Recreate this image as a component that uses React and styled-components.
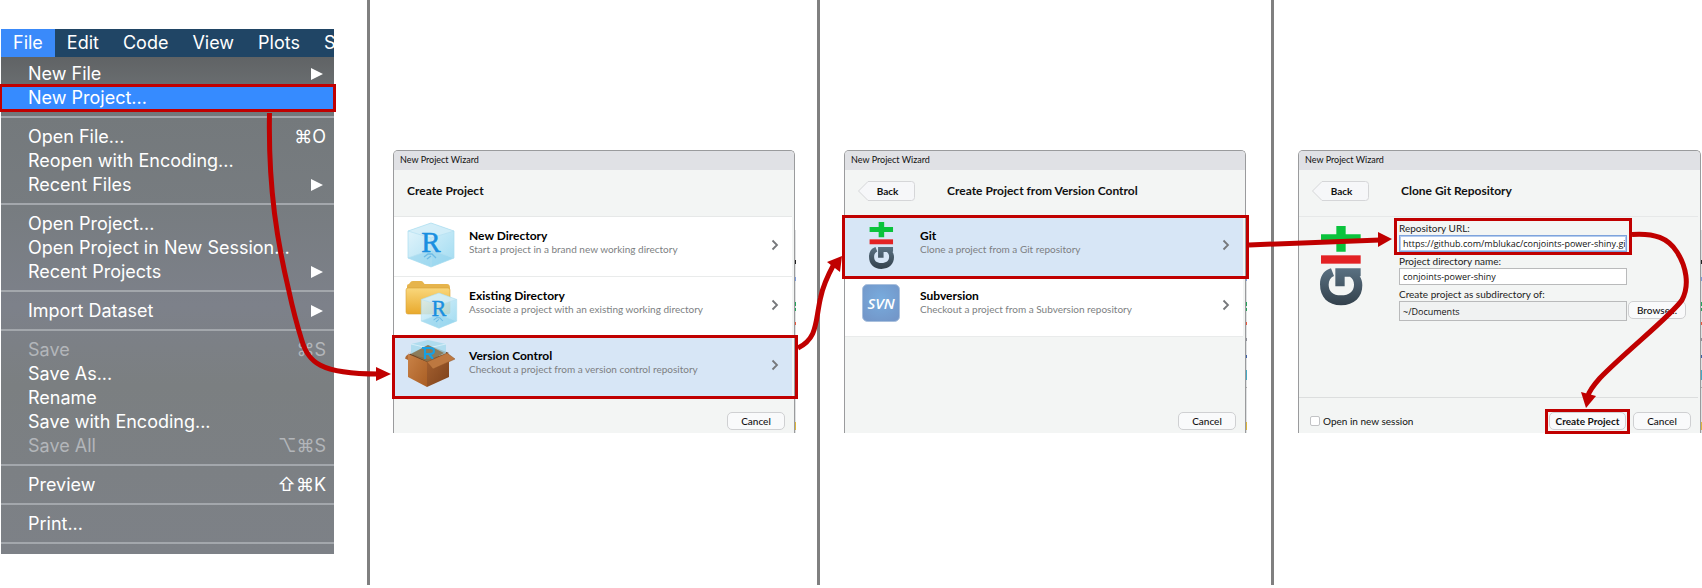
import React, { useId } from "react";
import styled, { createGlobalStyle, css } from "styled-components";

const RED = "#c00000";

const GlobalStyle = createGlobalStyle`
  *, *::before, *::after { box-sizing: border-box; }
  body { margin: 0; background: #fff; }
  button, input { font: inherit; color: inherit; margin: 0; }
`;

/* ---------- page ---------- */

const Board = styled.main`
  position: relative;
  display: grid;
  grid-template-columns: 370fr 450fr 454fr 428fr;
  font-family: Lato, "Open Sans", sans-serif;
  font-size: 10px;
  line-height: 14px;
  color: #111;
`;

const Panel = styled.section`
  min-height: 585px;
  padding: ${(p) => p.$padding};
  border-right: ${(p) => (p.$last ? "none" : "3px solid #808080")};
  min-width: 0;
`;

const highlight = css`
  position: relative;
  &::after {
    content: "";
    position: absolute;
    inset: ${(p) => p.$inset || "-2px"};
    border: 3px solid ${RED};
    pointer-events: none;
    z-index: 1;
  }
`;

/* ---------- file menu ---------- */

const MenuShot = styled.div`
  font-family: Inter, "DejaVu Sans", sans-serif;
  font-size: 18px;
  line-height: 24px;
  color: #fff;
`;

const MenuBar = styled.nav`
  display: flex;
  height: 28px;
  overflow: hidden;
  background: #204565;
`;

const MenuTab = styled.button`
  flex: none;
  border: 0;
  padding: 0 12px;
  background: ${(p) => (p.$active ? "#3a8afa" : "transparent")};
`;

const MenuList = styled.div`
  padding: 5px 0 3px;
  background: linear-gradient(#606365, #74797c 12%, #777c80 30%, #7d818a 50%, #7b7f81 66%, #7d8187);
`;

const MenuItem = styled.button`
  display: flex;
  align-items: center;
  justify-content: space-between;
  width: 100%;
  height: 24px;
  border: 0;
  padding: 0 8px 0 27px;
  text-align: left;
  white-space: nowrap;
  background: ${(p) => (p.$marked ? "#368bff" : "transparent")};
  color: ${(p) => (p.disabled ? "#b3b6ba" : "#fff")};
  ${(p) => p.$marked && highlight}
`;

const Divider = styled.hr`
  height: 2px;
  margin: 6px 0 7px;
  border: 0;
  background: #a3a7ac;
`;

const SubmenuArrow = () => (
  <svg width="15" height="12" viewBox="0 0 15 12" aria-hidden="true">
    <path d="M0 0L12 6L0 12Z" fill="#fff" />
  </svg>
);

const MENU = [
  [{ label: "New File", sub: true }, { label: "New Project...", marked: true }],
  [{ label: "Open File...", keys: "⌘O" }, { label: "Reopen with Encoding..." }, { label: "Recent Files", sub: true }],
  [{ label: "Open Project..." }, { label: "Open Project in New Session..." }, { label: "Recent Projects", sub: true }],
  [{ label: "Import Dataset", sub: true }],
  [
    { label: "Save", keys: "⌘S", disabled: true },
    { label: "Save As..." },
    { label: "Rename" },
    { label: "Save with Encoding..." },
    { label: "Save All", keys: "⌥⌘S", disabled: true },
  ],
  [{ label: "Preview", keys: "⇧⌘K" }],
  [{ label: "Print..." }],
];

function FileMenu() {
  return (
    <MenuShot>
      <MenuBar>
        {["File", "Edit", "Code", "View", "Plots", "Session"].map((t, i) => (
          <MenuTab key={t} $active={i === 0}>{t}</MenuTab>
        ))}
      </MenuBar>
      <MenuList>
        {MENU.map((group, g) => (
          <React.Fragment key={g}>
            {group.map((m) => (
              <MenuItem key={m.label} disabled={m.disabled} $marked={m.marked}>
                <span>{m.label}</span>
                {m.sub && <SubmenuArrow />}
                {m.keys && <span>{m.keys}</span>}
              </MenuItem>
            ))}
            <Divider />
          </React.Fragment>
        ))}
      </MenuList>
    </MenuShot>
  );
}

/* ---------- wizard window ---------- */

const Window = styled.div`
  position: relative;
  display: flex;
  flex-direction: column;
  min-height: 283px;
  border: 1px solid #9a9b9d;
  border-bottom: 0;
  border-radius: 5px 5px 0 0;
  background: #f3f5f4;
`;

const TitleBar = styled.div`
  height: 19px;
  padding: 0 6px;
  border-radius: 4px 4px 0 0;
  background: #e0e1e5;
  font-size: 9px;
  line-height: 18px;
`;

const Header = styled.header`
  display: flex;
  align-items: center;
  gap: 32px;
  height: 47px;
  margin-right: 2px;
  padding: 0 13px 4px;
  border-bottom: 1px solid #e6e8e8;
`;

const Heading = styled.h2`
  margin: 0;
  font-size: 12px;
  line-height: 16px;
  font-weight: 700;
  white-space: nowrap;
`;

const BackButton = styled.button`
  position: relative;
  width: 57px;
  height: 20px;
  border: 0;
  padding: 0 0 0 2px;
  background: none;
  font-weight: 700;
`;

const BackShape = styled.svg`
  position: absolute;
  inset: 0;
`;

const BackLabel = styled.span`
  position: relative;
`;

const Footer = styled.footer`
  display: flex;
  align-items: center;
  justify-content: flex-end;
  gap: 7px;
  height: 36px;
  margin-top: auto;
  margin-right: 2px;
  padding: 10px 7px 0 11px;
  border-top: 1px solid ${(p) => (p.$ruled ? "#dcdede" : "transparent")};
`;

const Button = styled.button`
  flex: none;
  width: ${(p) => p.$width || "58px"};
  height: 18px;
  border: 1px solid #cfd0d2;
  border-radius: 5px;
  padding: 0;
  background: #f9fafb;
  font-weight: ${(p) => (p.$strong ? 700 : 500)};
  white-space: nowrap;
`;

const Marked = styled.div`
  ${highlight}
  display: flex;
`;

const OptionList = styled.div`
  margin-right: 2px;
  background: #fff;
`;

const Option = styled.button`
  display: flex;
  width: 100%;
  height: 60px;
  border: 0;
  border-bottom: 1px solid #e9ebeb;
  padding: 2px 13px 0 10px;
  text-align: left;
  background: ${(p) => (p.$marked ? "#d7e6f6" : "#fff")};
  ${(p) => p.$marked && highlight}
`;

const OptionText = styled.span`
  flex: 1;
  padding: 10px 0 0 13px;
  line-height: 13px;
  color: #7d7f82;
  white-space: nowrap;
`;

const OptionTitle = styled.strong`
  display: block;
  font-size: 12px;
  line-height: 14px;
  color: #000;
`;

const Chevron = styled.svg`
  flex: none;
  margin-top: 20px;
`;

const Sliver = styled.svg`
  position: absolute;
  right: -2px;
  top: 79px;
`;

function DesktopSliver() {
  return (
    <Sliver width="1" height="203" viewBox="0 0 1 203" aria-hidden="true">
      <rect width="1" height="203" fill="#dfe1e2" />
      <rect y="30" width="1" height="4" fill="#222" />
      <rect y="47" width="1" height="4" fill="#7c9bdc" />
      <rect y="72" width="1" height="4" fill="#24a35a" />
      <rect y="78" width="1" height="3" fill="#24a35a" />
      <rect y="92" width="1" height="3" fill="#e8573c" />
      <rect y="108" width="1" height="3" fill="#8d8f98" />
      <rect y="125" width="1" height="3" fill="#3b5fa5" />
      <rect y="140" width="1" height="10" fill="#45a9c4" />
      <rect y="157" width="1" height="1" fill="#aaa" />
      <rect y="192" width="1" height="8" fill="#dcb63c" />
    </Sliver>
  );
}

function Wizard({ title, back, footer, ruled, children }) {
  return (
    <Window>
      <TitleBar>New Project Wizard</TitleBar>
      <Header>
        {back && (
          <BackButton>
            <BackShape width="57" height="20" viewBox="0 0 57 20" aria-hidden="true">
              <path d="M10 .5H53.5Q56.5 .5 56.5 3.5V16.5Q56.5 19.5 53.5 19.5H10L.5 10Z" fill="#f6f7f9" stroke="#d5d6d8" />
            </BackShape>
            <BackLabel>Back</BackLabel>
          </BackButton>
        )}
        <Heading>{title}</Heading>
      </Header>
      {children}
      <Footer $ruled={ruled}>{footer}</Footer>
      <DesktopSliver />
    </Window>
  );
}

function WizardOption({ icon, title, text, marked, inset }) {
  return (
    <Option $marked={marked} $inset={inset}>
      {icon}
      <OptionText>
        <OptionTitle>{title}</OptionTitle>
        {text}
      </OptionText>
      <Chevron width="8" height="12" viewBox="0 0 8 12" aria-hidden="true">
        <path d="M1.5 1.5L6 6L1.5 10.5" fill="none" stroke="#76787b" strokeWidth="1.8" />
      </Chevron>
    </Option>
  );
}

/* ---------- drawings ---------- */

const IconSvg = styled.svg`
  flex: none;
  overflow: visible;
`;

function Cube({ id }) {
  return (
    <g>
      <defs>
        <linearGradient id={id} x1="0" y1="0" x2="1" y2="1">
          <stop offset="0" stopColor="#e2f4fb" />
          <stop offset="1" stopColor="#8fd5ef" />
        </linearGradient>
      </defs>
      <path d="M24 0L47 8V35L24 44L1 35V8Z" fill={`url(#${id})`} fillOpacity=".85" />
      <path d="M1 8L24 15L47 8L24 0Z" fill="#d3eef8" fillOpacity=".8" />
      <path d="M1 35L24 27L47 35L24 44Z" fill="#8bd0eb" fillOpacity=".5" />
      <path d="M1 8L24 15L47 8M1 35L24 27L47 35M24 15V44" fill="none" stroke="#b5e0f0" strokeWidth=".7" />
      <path d="M24 0L47 8V35L24 44L1 35V8Z" fill="none" stroke="#a9dcef" strokeWidth=".7" />
      <path d="M17 34L21 31H25L29 35M20 36L24 33" fill="none" stroke="#55aee0" strokeWidth="1.3" strokeOpacity=".7" />
      <text x="24" y="29" textAnchor="middle" fontFamily='"Liberation Serif", serif' fontSize="29" fill="#1a8fe0" stroke="#1a8fe0" strokeWidth=".5">R</text>
    </g>
  );
}

function CubeIcon() {
  const id = useId();
  return (
    <IconSvg width="52" height="52" viewBox="0 0 52 52" aria-hidden="true">
      <g transform="translate(3 4)"><Cube id={id} /></g>
    </IconSvg>
  );
}

function FolderIcon() {
  const id = useId();
  return (
    <IconSvg width="52" height="52" viewBox="0 0 52 52" aria-hidden="true">
      <defs>
        <linearGradient id={id + "f"} x1="0" y1="0" x2="0" y2="1">
          <stop offset="0" stopColor="#f9d77c" />
          <stop offset="1" stopColor="#e9a92c" />
        </linearGradient>
      </defs>
      <path d="M3 7Q3 5 5 5L7 2.500Q7.500 2 9 2H17Q18.500 2 19 3L20.500 5H43Q46 5 46 9V12H3Z" fill="#e6b44c" />
      <path d="M2 11Q2 9 4 9H44Q46 9 46 11V33Q46 35 44 35H4Q2 35 2 33Z" fill={`url(#${id}f)`} stroke="#d9a136" strokeWidth=".6" />
      <g transform="translate(16.500 14) scale(.77 .8)"><Cube id={id} /></g>
    </IconSvg>
  );
}

function PackageIcon() {
  const id = useId();
  return (
    <IconSvg width="52" height="52" viewBox="0 0 52 52" aria-hidden="true">
      <defs>
        <linearGradient id={id + "l"} x1="0" y1="0" x2="1" y2="1">
          <stop offset="0" stopColor="#c98247" />
          <stop offset="1" stopColor="#a95e24" />
        </linearGradient>
        <linearGradient id={id + "r"} x1="0" y1="0" x2="1" y2="1">
          <stop offset="0" stopColor="#a76231" />
          <stop offset="1" stopColor="#7d421b" />
        </linearGradient>
      </defs>
      <path d="M4 16L24 6L45 14L24 24Z" fill="#6d4526" />
      <path d="M7 5L24 1L42 5V15L24 20L7 15Z" fill="#a5d9ec" fillOpacity=".8" />
      <path d="M7 5L24 9L42 5" fill="none" stroke="#dff3fa" strokeWidth=".8" />
      <path d="M7 15L24 6L40 14L24 23Z" fill="#8a7450" fillOpacity=".9" />
      <path d="M18 9H26Q30 9 30 12Q30 15 26 15H21M21 9V20M25 15L29 20" fill="none" stroke="#16a0e3" strokeWidth="2.200" />
      <path d="M4 15L23 23V48L4 38Z" fill={`url(#${id}l)`} />
      <path d="M23 23L45 15V38L23 48Z" fill={`url(#${id}r)`} />
      <path d="M4 15L8 12L2 17L1 19.500L4 21Z" fill="#b06a35" />
      <path d="M23 23L43 14L51 20L29 30Z" fill="#bd7840" stroke="#8e5225" strokeWidth=".5" />
    </IconSvg>
  );
}

function GitMark() {
  const id = useId();
  return (
    <g>
      <defs>
        <linearGradient id={id} x1="0" y1="126" x2="0" y2="238" gradientUnits="userSpaceOnUse">
          <stop offset="0" stopColor="#5a7182" />
          <stop offset="1" stopColor="#33414c" />
        </linearGradient>
      </defs>
      <path d="M49 0H77V25H122V51H77V77H49V51H3V25H49Z" fill="#0ac33c" />
      <rect x="3" y="88" width="119" height="25" fill="#e32224" />
      <path
        d="M27 129C10 136 0 152 0 175C0 214 24 238 63 238C103 238 127 214 127 178C127 167 124 158 119 151H122V127H46V181H74V152H90C98 157 102 165 102 176C102 196 88 208 63 208C38 208 26 196 26 176C26 163 32 154 42 150L33 127Z"
        fill={`url(#${id})`}
      />
    </g>
  );
}

const GitIcon = () => (
  <IconSvg width="52" height="52" viewBox="0 0 52 52" aria-hidden="true">
    <g transform="translate(14 3) scale(.197)"><GitMark /></g>
  </IconSvg>
);

function SvnIcon() {
  const id = useId();
  return (
    <IconSvg width="52" height="52" viewBox="0 0 52 52" aria-hidden="true">
      <defs>
        <radialGradient id={id} cx=".5" cy=".4" r=".65">
          <stop offset="0" stopColor="#78acde" />
          <stop offset="1" stopColor="#7397c9" />
        </radialGradient>
      </defs>
      <rect x="7.500" y="5.500" width="37" height="37" rx="5" fill={`url(#${id})`} stroke="#a9c0dd" />
      <text x="26" y="30" textAnchor="middle" fontFamily='"Open Sans", sans-serif' fontSize="15" fontWeight="600" fontStyle="italic" fill="#fff">SVN</text>
    </IconSvg>
  );
}

/* ---------- clone form ---------- */

const FormBody = styled.div`
  display: flex;
  gap: 36px;
  padding: 2px 12px 0 21px;
`;

const FormLogo = styled.svg`
  flex: none;
  margin-top: 7px;
`;

const Fields = styled.div`
  flex: 1;
  min-width: 0;
`;

const Field = styled.div`
  ${(p) => p.$marked && highlight}
  width: 228px;
  height: 33px;
`;

const Label = styled.label`
  display: block;
  height: 16px;
  padding-top: 2px;
  color: #222;
`;

const TextInput = styled.input`
  display: block;
  flex: none;
  width: 228px;
  height: ${(p) => p.$height || "17px"};
  border: 1px solid ${(p) => (p.$focused ? "#7ea3dc" : "#b9babb")};
  outline: ${(p) => (p.$focused ? "1px solid #b3cbee" : "none")};
  outline-offset: -2px;
  border-radius: 0;
  padding: 0 0 0 3px;
  font-family: "Open Sans", sans-serif;
  font-size: 9px;
  background: ${(p) => (p.readOnly ? "#f0f2f2" : "#fff")};
`;

const InlineRow = styled.div`
  display: flex;
  gap: 1px;
`;

const CheckLabel = styled.label`
  display: flex;
  align-items: center;
  gap: 3px;
  margin-right: auto;
`;

const CheckBox = styled.input`
  appearance: none;
  width: 10px;
  height: 10px;
  border: 1px solid #c2c3c5;
  border-radius: 2px;
  background: #fff;
`;

function CloneForm() {
  return (
    <FormBody>
      <FormLogo width="43" height="80" viewBox="0 0 129 240" aria-hidden="true">
        <GitMark />
      </FormLogo>
      <Fields>
        <Field $marked $inset="-1px -5px -3px -5px">
          <Label htmlFor="url">Repository URL:</Label>
          <TextInput id="url" $focused defaultValue="https://github.com/mblukac/conjoints-power-shiny.git" />
        </Field>
        <Field>
          <Label htmlFor="name">Project directory name:</Label>
          <TextInput id="name" defaultValue="conjoints-power-shiny" />
        </Field>
        <Field>
          <Label htmlFor="parent">Create project as subdirectory of:</Label>
          <InlineRow>
            <TextInput id="parent" readOnly $height="20px" defaultValue="~/Documents" />
            <Button>Browse...</Button>
          </InlineRow>
        </Field>
      </Fields>
    </FormBody>
  );
}

/* ---------- arrows between the steps ---------- */

const ArrowLayer = styled.svg`
  position: absolute;
  top: 0;
  left: 0;
  width: 100%;
  height: 585px;
  pointer-events: none;
  z-index: 2;
`;

function Arrows() {
  return (
    <ArrowLayer viewBox="0 0 1702 585" preserveAspectRatio="none" aria-hidden="true">
      <g fill="none" stroke={RED} strokeWidth="5">
        <path d="M269.500 113C268 190 278 245 288.700 290C293 310 297 325 301.700 340C308 362 320 374 378 374" />
        <path d="M798 348C818 338 815 322 820.500 298C823 285 828 275 834 264" />
        <path d="M1249 245L1380 240" />
        <path d="M1632 234.500C1655 233 1668 238 1677 252C1686 266 1690 285 1682 300C1672 315 1625 352 1600 378C1592 387 1589 391 1588 396" />
      </g>
      <g fill={RED}>
        <path d="M391 374L376 367V381Z" />
        <path d="M842 256L827 262L840 272Z" />
        <path d="M1392 239L1378 232V247Z" />
        <path d="M1586 408L1581 392L1596 396Z" />
      </g>
    </ArrowLayer>
  );
}

export default function App() {
  return (
    <>
      <GlobalStyle />
      <Board>
        <Panel $padding="29px 33px 0 1px">
          <FileMenu />
        </Panel>

        <Panel $padding="150px 22px 0 23px">
          <Wizard title="Create Project" footer={<Button>Cancel</Button>}>
            <OptionList>
              <WizardOption icon={<CubeIcon />} title="New Directory" text="Start a project in a brand new working directory" />
              <WizardOption icon={<FolderIcon />} title="Existing Directory" text="Associate a project with an existing working directory" />
              <WizardOption marked inset="-2px -6px -3px -2px" icon={<PackageIcon />} title="Version Control" text="Checkout a project from a version control repository" />
            </OptionList>
          </Wizard>
        </Panel>

        <Panel $padding="150px 25px 0 24px">
          <Wizard back title="Create Project from Version Control" footer={<Button>Cancel</Button>}>
            <OptionList>
              <WizardOption marked inset="-2px -6px -3px -3px" icon={<GitIcon />} title="Git" text="Clone a project from a Git repository" />
              <WizardOption icon={<SvnIcon />} title="Subversion" text="Checkout a project from a Subversion repository" />
            </OptionList>
          </Wizard>
        </Panel>

        <Panel $last $padding="150px 1px 0 24px">
          <Wizard
            back
            ruled
            title="Clone Git Repository"
            footer={
              <>
                <CheckLabel>
                  <CheckBox type="checkbox" />
                  Open in new session
                </CheckLabel>
                <Marked $inset="-3px -4px -4px -4px">
                  <Button $strong $width="77px">Create Project</Button>
                </Marked>
                <Button>Cancel</Button>
              </>
            }
          >
            <CloneForm />
          </Wizard>
        </Panel>
        <Arrows />
      </Board>
    </>
  );
}
